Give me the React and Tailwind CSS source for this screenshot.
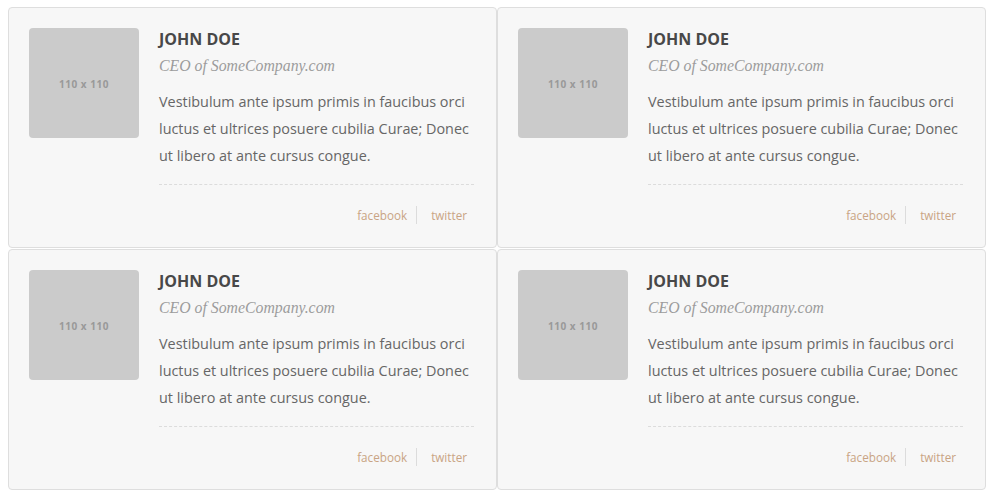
import React from 'react'

const people = [1, 2, 3, 4].map((id) => ({
  id,
  name: 'JOHN DOE',
  title: 'CEO of SomeCompany.com',
  bio: 'Vestibulum ante ipsum primis in faucibus orci luctus et ultrices posuere cubilia Curae; Donec ut libero at ante cursus congue.',
}))

function TeamCard({ person }) {
  return (
    <div className="flex h-[241px] rounded-[4px] border border-[#dedede] bg-[#f7f7f7] p-5">
      <div className="flex h-[110px] w-[110px] shrink-0 items-center justify-center rounded-[4px] bg-[#cbcbcb] pt-[2px] text-[10px] font-bold tracking-[0.5px] text-[#999]">
        110 x 110
      </div>
      <div className="ml-5 flex-1">
        <h3 className="text-[16px] font-bold leading-[22px] text-[#484848]">{person.name}</h3>
        <p className="mt-[5px] font-['Liberation_Serif',serif] text-[15.8px] italic leading-[22px] text-[#9c9c9c]">
          {person.title}
        </p>
        <p className="mt-[11px] mr-[2px] border-b border-dashed border-[#dcdcdc] pb-[15px] text-[14.4px] leading-[27px] text-[#666]">
          {person.bio}
        </p>
        <div className="flex justify-end pt-[21px] text-[11.7px] leading-[18px] text-[#c9a484]">
          <a href="#" className="pr-[9px]">facebook</a>
          <a href="#" className="border-l border-[#dcdcdc] pl-[14px] pr-[9px]">twitter</a>
        </div>
      </div>
    </div>
  )
}

export default function App() {
  return (
    <div className="min-h-[498px] bg-white pl-2 pt-[7px] font-['Open_Sans',sans-serif]">
      <div className="grid w-[980px] grid-cols-[489px_489px] gap-x-0 gap-y-[1px]">
        {people.map((p) => (
          <TeamCard key={p.id} person={p} />
        ))}
      </div>
    </div>
  )
}
